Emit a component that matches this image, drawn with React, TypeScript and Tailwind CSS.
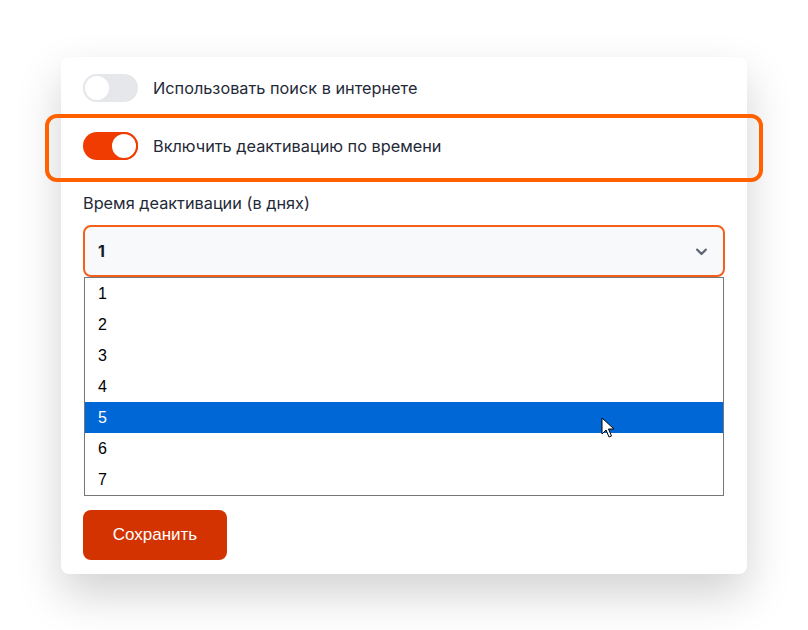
import React from 'react';

const days = [1, 2, 3, 4, 5, 6, 7];

function Toggle({ on }: { on: boolean }) {
  return (
    <div
      className={`flex h-7 w-[55px] shrink-0 items-center rounded-full ${
        on ? 'justify-end bg-[#f03c00]' : 'justify-start bg-[#e5e7eb]'
      }`}
    >
      <div
        className={`h-7 w-7 rounded-full border-2 bg-white ${
          on ? 'border-[#f03c00]' : 'border-[#e5e7eb]'
        }`}
      />
    </div>
  );
}

function Cursor() {
  return (
    <svg width="14" height="22" viewBox="0 0 14 22" className="absolute left-[601px] top-[417px]">
      <path
        d="M1 1 L1 17 L5 13 L8 20 L10.5 19 L7.5 12 L13 12 Z"
        fill="#fff"
        stroke="#000"
        strokeWidth="1"
        strokeLinejoin="round"
      />
    </svg>
  );
}

export default function App() {
  return (
    <div className="relative h-[630px] w-[808px] bg-white font-['Inter',sans-serif] text-[#1f2937]">
      <div className="pt-[57px]">
        <div className="mx-auto flex w-[686px] flex-col rounded-lg bg-white px-[22px] pb-[14px] pt-[17px] shadow-[0_20px_45px_rgba(0,0,0,0.18)]">
          {/* toggles */}
          <div className="flex items-center gap-[15px]">
            <Toggle on={false} />
            <span className="text-[16.3px]">Использовать поиск в интернете</span>
          </div>
          <div className="mt-[30px] flex items-center gap-[15px]">
            <Toggle on />
            <span className="text-[16.3px]">Включить деактивацию по времени</span>
          </div>

          {/* select */}
          <label className="mt-[31px] text-[16.3px] leading-6">Время деактивации (в днях)</label>
          <div className="mt-[10px] flex h-[52px] items-center justify-between rounded-lg border-2 border-[#f4601c] bg-[#f8f9fb] pl-[13px] pr-[14px]">
            <span className="text-base font-bold text-[#111827]">1</span>
            <svg width="15" height="15" viewBox="0 0 24 24" fill="none" stroke="#5f6673" strokeWidth="3.4" strokeLinecap="round" strokeLinejoin="round">
              <path d="M5 9l7 7 7-7" />
            </svg>
          </div>
          <div className="mx-px border border-[#767676] bg-white font-['Liberation_Sans',Arial,sans-serif] text-black">
            {days.map((d) => (
              <div
                key={d}
                className={`flex h-[31px] items-center pl-[13px] text-base ${
                  d === 5 ? 'bg-[#0067d6] text-white' : ''
                }`}
              >
                {d}
              </div>
            ))}
          </div>

          <button className="mt-[14px] h-[50px] w-[144px] rounded-lg bg-[#d23300] font-['Liberation_Sans',Arial,sans-serif] text-[17px] text-white">
            Сохранить
          </button>
        </div>
      </div>

      {/* highlight annotation */}
      <div className="pointer-events-none absolute left-[45px] top-[114px] h-[68px] w-[718px] rounded-xl border-4 border-[#ff6000]" />
      <Cursor />
    </div>
  );
}
